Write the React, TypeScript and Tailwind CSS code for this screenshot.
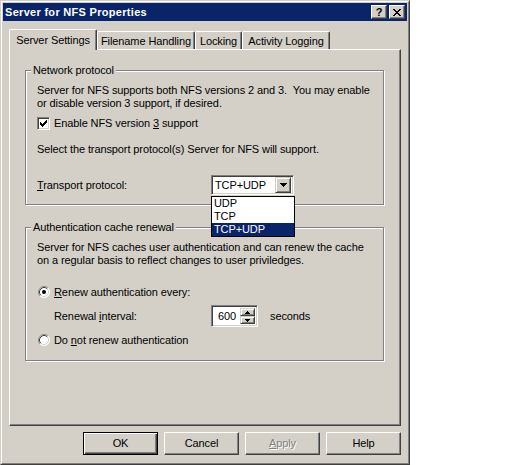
import React from "react";

const raised =
  "bg-[#d4d0c8] border border-t-white border-l-white border-r-[#404040] border-b-[#404040] shadow-[inset_-1px_-1px_0_#808080]";
const scrollBtn =
  "bg-[#d4d0c8] border border-t-[#d4d0c8] border-l-[#d4d0c8] border-r-[#404040] border-b-[#404040] shadow-[inset_1px_1px_0_#fff,inset_-1px_-1px_0_#808080]";
const sunken =
  "bg-white border border-t-[#808080] border-l-[#808080] border-r-white border-b-white shadow-[inset_1px_1px_0_#404040,inset_-1px_-1px_0_#d4d0c8]";

function Checkbox() {
  return (
    <div className={`w-[13px] h-[13px] flex items-center justify-center ${sunken}`}>
      <svg width="7" height="7" viewBox="0 0 7 7" shapeRendering="crispEdges">
        <path d="M0 2h1v1h1v1h1V3h1V2h1V1h1V0h1v3H6v1H5v1H4v1H3v1H2V6H1V5H0z" fill="#000" />
      </svg>
    </div>
  );
}

function Radio({ checked }: { checked?: boolean }) {
  return (
    <svg width="12" height="12" viewBox="0 0 12 12">
      <circle cx="6" cy="6" r="5.5" fill="#fff" />
      <path d="M2.11 9.89 A5.5 5.5 0 0 1 9.89 2.11" stroke="#808080" fill="none" />
      <path d="M9.89 2.11 A5.5 5.5 0 0 1 2.11 9.89" stroke="#ffffff" fill="none" />
      <path d="M2.82 9.18 A4.5 4.5 0 0 1 9.18 2.82" stroke="#404040" fill="none" />
      <path d="M9.18 2.82 A4.5 4.5 0 0 1 2.82 9.18" stroke="#d4d0c8" fill="none" />
      {checked && <circle cx="6" cy="6" r="2" fill="#000" />}
    </svg>
  );
}

function Group({
  title,
  className,
  children,
}: {
  title: string;
  className?: string;
  children: React.ReactNode;
}) {
  return (
    <div
      className={`relative w-[359px] border border-[#808080] shadow-[1px_1px_0_#fff,inset_1px_1px_0_#fff] pl-[11px] ${className ?? ""}`}
    >
      <span className="absolute left-[5px] top-[-7px] bg-[#d4d0c8] px-[2px] leading-[13px] whitespace-nowrap">
        {title}
      </span>
      {children}
    </div>
  );
}

function Btn({ children, def, disabled }: { children: React.ReactNode; def?: boolean; disabled?: boolean }) {
  const cls = def
    ? "bg-[#d4d0c8] border border-black shadow-[inset_1px_1px_0_#fff,inset_-1px_-1px_0_#404040,inset_-2px_-2px_0_#808080]"
    : raised;
  return (
    <div
      className={`w-[75px] h-[23px] flex items-center justify-center ${cls} ${
        disabled ? "text-[#808080] [text-shadow:1px_1px_0_#fff]" : ""
      }`}
    >
      {children}
    </div>
  );
}

export default function App() {
  return (
    <div className="w-[512px] h-[465px] bg-white">
      <div className="w-[410px] h-[465px] bg-[#d4d0c8] border border-t-[#d4d0c8] border-l-[#d4d0c8] border-r-[#404040] border-b-[#404040] text-[11px] leading-[13px] tracking-[-0.1px] text-black font-['Liberation_Sans',Arial,sans-serif]">
        <div className="h-full border border-t-white border-l-white border-r-[#808080] border-b-[#808080] p-px flex flex-col">
          {/* Title bar */}
          <div className="h-[18px] bg-[#0a246a] flex items-center pl-[2px] pr-[2px]">
            <span className="text-white font-bold text-[11px] tracking-[0.3px] flex-1 whitespace-nowrap">
              Server for NFS Properties
            </span>
            <div className={`w-[16px] h-[14px] flex items-center justify-center font-bold text-[11px] leading-none ${raised}`}>
              ?
            </div>
            <div className={`ml-[2px] w-[16px] h-[14px] flex items-center justify-center ${raised}`}>
              <svg width="8" height="7" viewBox="0 0 8 7" shapeRendering="crispEdges">
                <path
                  d="M0 0h2v1h1v1h2V1h1V0h2v1H7v1H6v1H5v1h1v1h1v1h1v1H6V6H5V5H3v1H2v1H0V6h1V5h1V4h1V3H2V2H1V1H0z"
                  fill="#000"
                />
              </svg>
            </div>
          </div>

          {/* Tabs */}
          <div className="mt-[8px] h-[20px] flex items-end pl-[6px]">
            <div className="relative z-10 -mb-px w-[88px] h-[21px] bg-[#d4d0c8] border-t border-l border-t-white border-l-white border-r border-r-[#404040] shadow-[inset_-1px_0_0_#808080] rounded-tl-[2px] rounded-tr-[2px] flex justify-center pt-[4px] whitespace-nowrap">
              Server Settings
            </div>
            <div className="w-[98px] h-[18px] border-t border-l border-t-white border-l-white border-r border-r-[#404040] shadow-[inset_-1px_0_0_#808080] rounded-tl-[2px] rounded-tr-[2px] flex justify-center pt-[3px] whitespace-nowrap">
              Filename Handling
            </div>
            <div className="w-[47px] h-[18px] border-t border-l border-t-white border-l-white border-r border-r-[#404040] shadow-[inset_-1px_0_0_#808080] rounded-tl-[2px] rounded-tr-[2px] flex justify-center pt-[3px] whitespace-nowrap">
              Locking
            </div>
            <div className="w-[88px] h-[18px] border-t border-l border-t-white border-l-white border-r border-r-[#404040] shadow-[inset_-1px_0_0_#808080] rounded-tl-[2px] rounded-tr-[2px] flex justify-center pt-[3px] whitespace-nowrap">
              Activity Logging
            </div>
          </div>

          {/* Panel */}
          <div className="ml-[6px] w-[392px] h-[377px] border border-t-white border-l-white border-r-[#404040] border-b-[#404040] shadow-[inset_-1px_-1px_0_#808080] pl-[15px] pt-[20px]">
            <Group title="Network protocol" className="pt-[13px] pb-[9px] z-20">
              <div className="whitespace-pre">
                {"Server for NFS supports both NFS versions 2 and 3.  You may enable"}
                <br />
                {"or disable version 3 support, if desired."}
              </div>
              <div className="mt-[6px] h-[14px] flex items-center gap-[4px]">
                <Checkbox />
                <span>
                  Enable NFS version <u>3</u> support
                </span>
              </div>
              <div className="mt-[13px]">Select the transport protocol(s) Server for NFS will support.</div>
              <div className="mt-[19px] h-[20px] flex items-center">
                <span className="w-[174px]">
                  <u>T</u>ransport protocol:
                </span>
                <div className="relative">
                  <div className={`w-[83px] h-[20px] flex items-center ${sunken} p-[2px]`}>
                    <span className="flex-1 pl-[1px]">TCP+UDP</span>
                    <div className={`w-[16px] h-[16px] flex items-center justify-center ${scrollBtn}`}>
                      <svg width="7" height="4" viewBox="0 0 7 4" shapeRendering="crispEdges">
                        <path d="M0 0h7v1H6v1H5v1H4v1H3V3H2V2H1V1H0z" fill="#000" />
                      </svg>
                    </div>
                  </div>
                  <div className="absolute left-0 top-[21px] w-[84px] border border-black bg-white">
                    <div className="h-[13px] pl-[2px]">UDP</div>
                    <div className="h-[13px] pl-[2px]">TCP</div>
                    <div className="h-[13px] pl-[2px] bg-[#0a246a] text-white">TCP+UDP</div>
                  </div>
                </div>
              </div>
            </Group>

            <Group title="Authentication cache renewal" className="mt-[22px] pt-[13px] pb-[13px]">
              <div>
                Server for NFS caches user authentication and can renew the cache
                <br />
                on a regular basis to reflect changes to user priviledges.
              </div>
              <div className="mt-[18px] h-[14px] flex items-center gap-[4px]">
                <div className="ml-[1px]">
                  <Radio checked />
                </div>
                <span>
                  <u>R</u>enew authentication every:
                </span>
              </div>
              <div className="mt-[6px] h-[22px] flex items-center pl-[17px]">
                <span className="w-[157px]">
                  Renewal <u>i</u>nterval:
                </span>
                <div className={`w-[47px] h-[22px] flex ${sunken} p-[2px]`}>
                  <span className="flex-1 pl-[4px] flex items-center">600</span>
                  <div className="w-[15px] flex flex-col">
                    <div className={`h-[9px] flex items-center justify-center ${scrollBtn}`}>
                      <svg width="5" height="3" viewBox="0 0 5 3" shapeRendering="crispEdges">
                        <path d="M2 0h1v1h1v1h1v1H0V2h1V1h1z" fill="#000" />
                      </svg>
                    </div>
                    <div className={`h-[9px] flex items-center justify-center ${scrollBtn}`}>
                      <svg width="5" height="3" viewBox="0 0 5 3" shapeRendering="crispEdges">
                        <path d="M0 0h5v1H4v1H3v1H2V2H1V1H0z" fill="#000" />
                      </svg>
                    </div>
                  </div>
                </div>
                <span className="ml-[12px]">seconds</span>
              </div>
              <div className="mt-[6px] h-[14px] flex items-center gap-[4px]">
                <div className="ml-[1px]">
                  <Radio />
                </div>
                <span>
                  Do <u>n</u>ot renew authentication
                </span>
              </div>
            </Group>
          </div>

          {/* Buttons */}
          <div className="ml-[6px] w-[392px] mt-[6px] flex justify-end gap-[6px]">
            <Btn def>OK</Btn>
            <Btn>Cancel</Btn>
            <Btn disabled>
              <span>
                <u>A</u>pply
              </span>
            </Btn>
            <Btn>Help</Btn>
          </div>
        </div>
      </div>
    </div>
  );
}
